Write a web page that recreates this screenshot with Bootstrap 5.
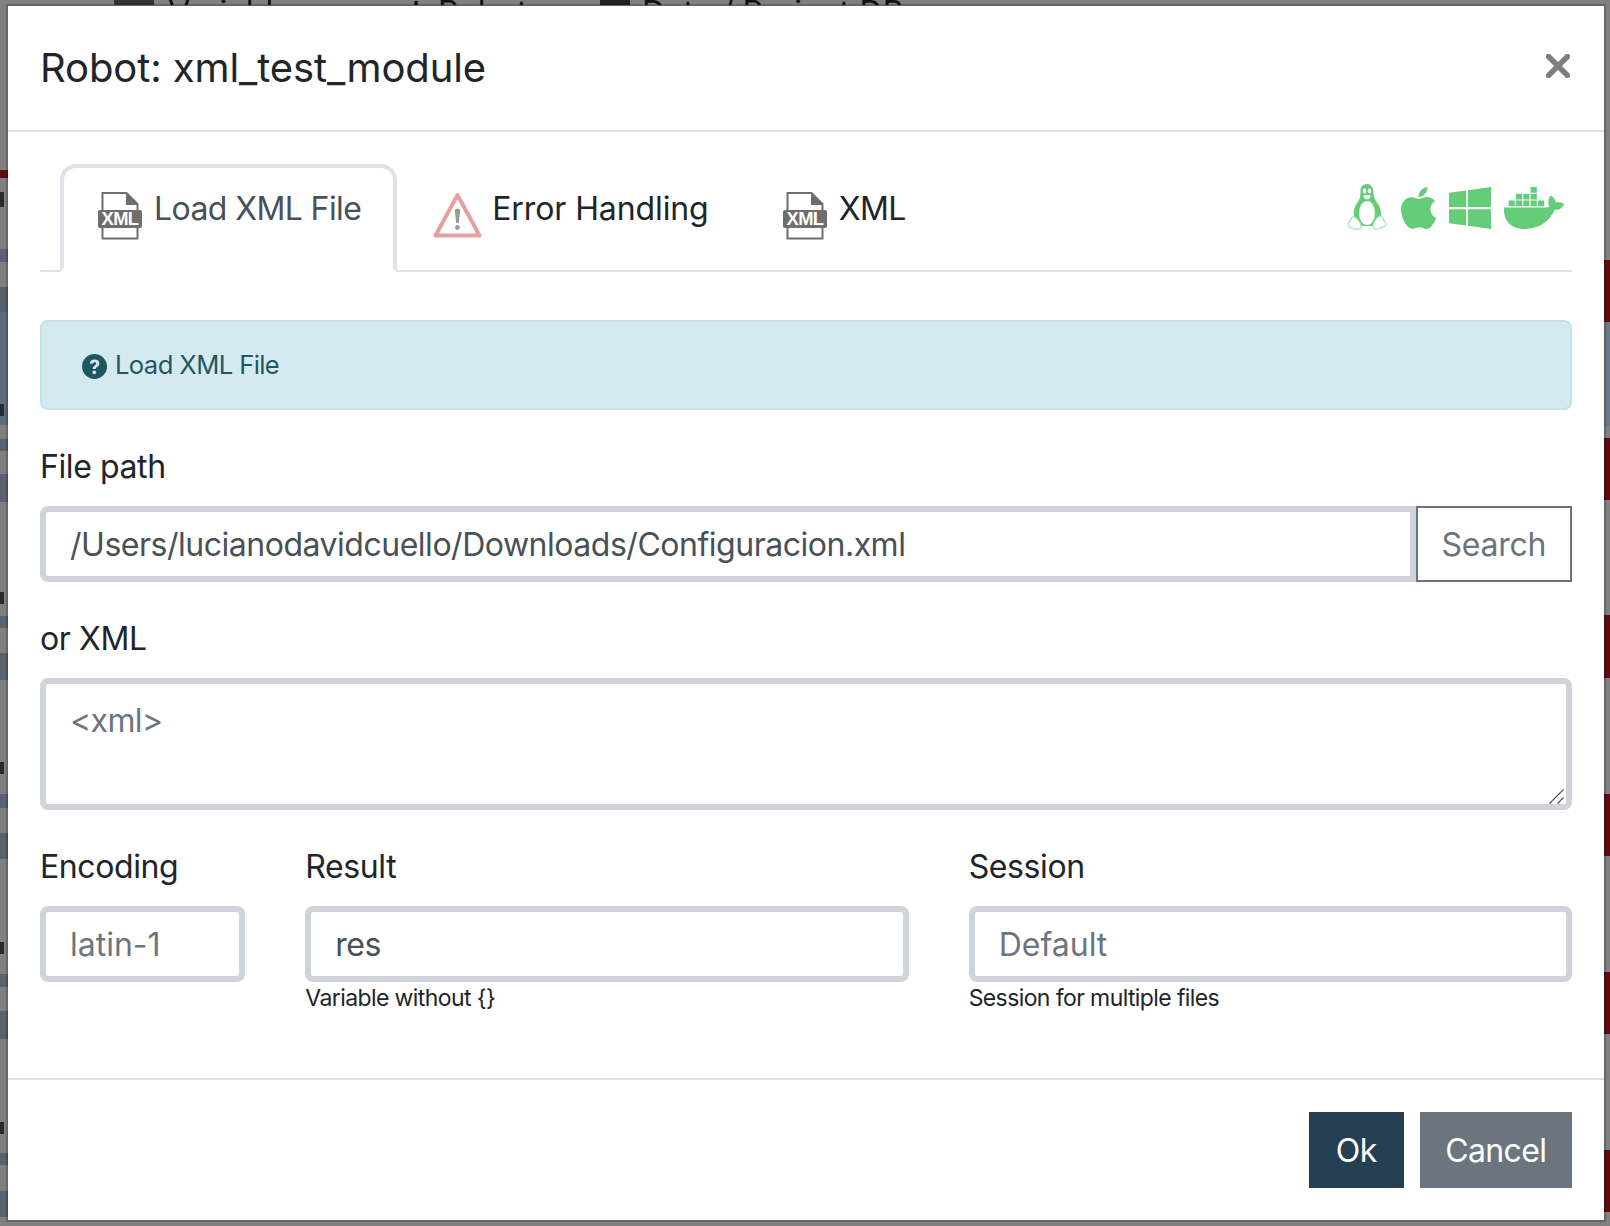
<!DOCTYPE html>
<html lang="en">
<head>
  <meta charset="UTF-8">
  <meta name="viewport" content="width=device-width, initial-scale=1.0">
  <title>Robot: xml_test_module</title>
  <link href="https://cdn.jsdelivr.net/npm/bootstrap@5.3.2/dist/css/bootstrap.min.css" rel="stylesheet">
  <style>
    html { font-size: 32px; }
    body {
      font-family: Inter, "Open Sans", "Liberation Sans", sans-serif;
      letter-spacing: -.6px;
      color: #212529;
      overflow: hidden;
      height: 1226px;
      background-color: #808080;
      background-repeat: no-repeat;
      background-image:
        linear-gradient(#0000 0 192px, #2a2a2a 192px 207px, #0000 207px 404px, #2a2a2a 404px 416px, #0000 416px 592px, #2a2a2a 592px 604px, #0000 604px 762px, #2a2a2a 762px 774px, #0000 774px 942px, #2a2a2a 942px 954px, #0000 954px 1122px, #2a2a2a 1122px 1134px, #0000 1134px),
        linear-gradient(#808080 0 170px, #5c0e0e 170px 178px, #808080 178px 249px, #5a6370 249px 262px, #808080 262px 287px, #555e6b 287px 312px, #5d6b7e 312px 425px, #808080 425px 439px, #59626f 439px 451px, #808080 451px 474px, #59626f 474px 502px, #808080 502px 616px, #59626f 616px 628px, #808080 628px 653px, #59626f 653px 680px, #808080 680px 794px, #59626f 794px 808px, #808080 808px 833px, #59626f 833px 859px, #808080 859px 974px, #59626f 974px 987px, #808080 987px 1011px, #59626f 1011px 1039px, #808080 1039px 1153px, #59626f 1153px 1165px, #808080 1165px 1191px, #59626f 1191px 1217px, #808080 1217px),
        linear-gradient(#808080 0 260px, #5c0e0e 260px 322px, #6b7888 322px 426px, #808080 426px 438px, #5c0e0e 438px 500px, #808080 500px 615px, #5c0e0e 615px 678px, #808080 678px 794px, #5c0e0e 794px 856px, #808080 856px 972px, #5c0e0e 972px 1034px, #808080 1034px 1150px, #5c0e0e 1150px 1212px, #808080 1212px);
      background-size: 4px 100%, 8px 100%, 6px 100%;
      background-position: left top, left top, right top;
    }

    /* what is left of the page behind the dialog, only the tops of the letters show */
    .behind-strip { height: 5px; overflow: hidden; padding-left: 114px; color: #111; letter-spacing: .2px; }
    .behind-strip span { line-height: 32px; margin-top: -3px; white-space: nowrap; flex-shrink: 0; }
    .behind-block { width: 40px; height: 10px; background: #333; margin-right: 14px; }
    .behind-block-sm { width: 30px; height: 10px; background: #222; margin-right: 12px; }
    .w-vars { width: 232px; }
    .w-dots { width: 38px; }
    .w-robot { width: 162px; }

    .modal {
      --bs-modal-width: 1600px;
      --bs-modal-border-width: 2px;
      --bs-modal-border-color: rgba(0, 0, 0, .2);
      --bs-modal-border-radius: 0;
      --bs-modal-inner-border-radius: 0;
      --bs-modal-header-border-color: #dee2e6;
      --bs-modal-header-border-width: 2px;
      --bs-modal-footer-border-color: #dee2e6;
      --bs-modal-footer-border-width: 2px;
      overflow: hidden;
    }
    .modal-dialog { margin: 4px 0 0 6px !important; width: 1600px; }
    .modal-title { font-size: 40px; font-weight: 400; letter-spacing: -.1px; }
    .close-x { background: none; border: 0; padding: 0; width: 24px; height: 24px; margin: 0 2px 4px auto; line-height: 0; }

    .tabs-row { padding-left: 20px; border-bottom: 2px solid #dee2e6; margin-bottom: 48px; }
    .tabs-row .nav-link {
      display: flex;
      align-items: flex-start;
      gap: 12px;
      padding: 17px 32px 28px;
      margin-bottom: -2px;
      border: 4px solid transparent;
      border-radius: 16px 16px 0 0;
      color: #212529;
    }
    .tabs-row .nav-link.active { color: #495057; border-color: #dee2e6 #dee2e6 #fff; background: #fff; }
    .tabs-row .nav-link.tab-error { gap: 10px; letter-spacing: -.1px; }
    .tab-ico { margin-top: 7px; flex-shrink: 0; }
    .xml-ico { margin-left: 2px; }
    .os-icons { margin-left: auto; padding: 19px 8px 0 0; display: flex; gap: 13px; align-items: flex-start; }
    .os-icons svg { margin-top: 4px; fill: #65cc78; }
    .os-icons svg.tux { margin-top: 0; margin-right: 1px; }

    .info-box {
      --bs-alert-bg: #d5eaf0;
      --bs-alert-color: #1f5662;
      --bs-alert-border-color: #c0e3ea;
      --bs-alert-padding-x: 40px;
      --bs-alert-padding-y: 24px;
      --bs-alert-margin-bottom: 32px;
      --bs-alert-border-radius: 8px;
      border-width: 2px;
      font-size: 25.6px;
    }
    .info-ico { width: 25px; height: 25px; margin-right: 8px; vertical-align: -5px; fill: #1f5662; }

    .form-label { margin-bottom: 15px; padding-top: 1px; letter-spacing: -.4px; }
    .field-block { margin-bottom: 32px; }
    .form-control {
      border: 6px solid #ced4da;
      border-radius: 8px;
      padding: 9px 24px 7px;
      color: #495057;
      letter-spacing: -.48px;
    }
    .form-control::placeholder { color: #6c757d; opacity: 1; letter-spacing: 0; }
    textarea.form-control {
      height: 132px;
      padding-top: 13px;
      resize: none;
      background: #fff url("data:image/svg+xml,%3Csvg xmlns='http://www.w3.org/2000/svg' width='15' height='15'%3E%3Cpath d='M.5 14.500l14-14M8.500 14.500l6-6' stroke='%23555' stroke-width='1.200'/%3E%3C/svg%3E") no-repeat right 2px bottom 0;
    }
    textarea.form-control::placeholder { letter-spacing: -.6px; }
    .btn-search {
      --bs-btn-border-width: 2px;
      --bs-btn-padding-x: 24px;
      --bs-btn-padding-y: 12px;
      --bs-btn-font-size: 1rem;
      letter-spacing: -.3px;
      padding-top: 13px;
      padding-bottom: 11px;
      border-radius: 0 !important;
      margin-left: 0 !important;
    }
    .path-group > .form-control { border-radius: 8px 0 0 8px; }
    .cols-row { --bs-gutter-x: 60px; }
    .hint-text { display: block; font-size: 23px; line-height: 34px; height: 34px; margin-top: -1px; color: #212529; }
    .body-pad { padding-bottom: 63px !important; }
    .btn-square {
      --bs-btn-padding-x: 23.5px;
      --bs-btn-border-width: 2px;
      --bs-btn-font-size: 1rem;
      letter-spacing: -.6px;
      padding-top: 13px;
      padding-bottom: 11px;
      border-radius: 0;
    }
    .btn-ok { --bs-btn-padding-x: 25px; --bs-btn-bg: #264053; --bs-btn-border-color: #264053; --bs-btn-color: #fff; }
  </style>
</head>
<body>

  <div class="behind-strip d-flex align-items-start">
    <div class="behind-block"></div>
    <span class="w-vars">Variables</span>
    <span class="w-dots">⋮</span>
    <span class="w-robot">Robot</span>
    <div class="behind-block-sm"></div>
    <span>Data / Project DB</span>
  </div>

  <svg width="0" height="0" class="position-absolute">
    <symbol id="xml-file" viewBox="0 0 44 48">
      <path d="M4.500 1h24L39.500 12v34.500h-35z" fill="#fff" stroke="#6e6e6e" stroke-width="2"/>
      <path d="M28 1l12 12H28z" fill="#6e6e6e"/>
      <rect x="0" y="18" width="44" height="18" rx="2" fill="#6e6e6e"/>
      <text x="22" y="33" text-anchor="middle" font-family="Liberation Sans, sans-serif" font-weight="700" font-size="19" textLength="37" lengthAdjust="spacingAndGlyphs" fill="#fff">XML</text>
    </symbol>
  </svg>

  <div class="modal d-block" tabindex="-1">
    <div class="modal-dialog">
      <div class="modal-content">
        <div class="modal-header">
          <h5 class="modal-title">Robot: xml_test_module</h5>
          <button type="button" class="close-x" aria-label="Close">
            <svg width="24" height="24" viewBox="0 0 24 24"><path d="M2.500 2.500l19 19M21.500 2.500l-19 19" stroke="#7f7f7f" stroke-width="5.500" stroke-linecap="round"/></svg>
          </button>
        </div>

        <div class="modal-body body-pad">
          <ul class="nav tabs-row">
            <li class="nav-item">
              <a class="nav-link active" href="#">
                <svg class="tab-ico xml-ico" width="44" height="48"><use href="#xml-file"/></svg>
                Load XML File
              </a>
            </li>
            <li class="nav-item">
              <a class="nav-link tab-error" href="#">
                <svg class="tab-ico" width="49" height="46" viewBox="0 0 49 46">
                  <path d="M24.500 3L2.500 43.500h44z" fill="#fff" stroke="#e8a09e" stroke-width="4" stroke-linejoin="round"/>
                  <path d="M21.800 18.500c0-2.500 5.400-2.500 5.400 0l-1.400 12.500h-2.600z" fill="#999"/>
                  <circle cx="24.500" cy="35.500" r="2.400" fill="#999"/>
                </svg>
                Error Handling
              </a>
            </li>
            <li class="nav-item">
              <a class="nav-link" href="#">
                <svg class="tab-ico xml-ico" width="44" height="48"><use href="#xml-file"/></svg>
                XML
              </a>
            </li>
            <li class="os-icons">
              <svg class="tux" width="40" height="49" viewBox="0 0 40 49">
                <path d="M20 1c-5 0-7 4-6.500 9 .3 4-1.500 7-3.500 10-2.500 4-4 8-3 13l3 7 5 3h10l6-3 3-8c.5-5-1.500-9-4-12.500-2-3-3.500-5.500-3.500-9.500 0-5-2-9-6.500-9z"/>
                <ellipse cx="20" cy="30" rx="8" ry="12" fill="#fff"/>
                <ellipse cx="17.500" cy="8" rx="1.800" ry="2.400" fill="#fff"/>
                <ellipse cx="22.500" cy="8" rx="1.800" ry="2.400" fill="#fff"/>
                <path d="M15.500 12.500c2-1.500 7-1.500 9 0-1 3-3 4.500-4.500 4.500s-3.500-1.500-4.500-4.500z" fill="#fff" stroke="#65cc78"/>
                <path d="M1.500 40c2-2 2-5 4-6 3-1 5 2 7 5 1.500 2.500 2.500 5 1 6.500-3 2-6 .5-9-.5-2-.5-4-2-3-5z" fill="#fff" stroke="#a5e2b0" stroke-width="1.200"/>
                <path d="M38.500 40c-2-1.500-1.500-5-4-6.500-1-1-3 0-5 2-2.500 3-4 6.500-3 9 1 2 3.500 2 6 1 2-1 4.500-1.500 6-3 .7-.8.7-1.800 0-2.500z" fill="#fff" stroke="#a5e2b0" stroke-width="1.200"/>
              </svg>
              <svg width="35" height="42" viewBox="4 32 374 448"><path d="M318.700 268.700c-.2-36.700 16.400-64.400 50-84.800-18.800-26.900-47.200-41.700-84.700-44.600-35.500-2.800-74.300 20.700-88.500 20.700-15 0-49.400-19.700-76.400-19.700C63.300 141.200 4 184.800 4 273.500q0 39.300 14.400 81.200c12.800 36.700 59 126.700 107.200 125.200 25.200-.6 43-17.900 75.800-17.900 31.800 0 48.300 17.900 76.400 17.900 48.600-.7 90.400-82.500 102.600-119.300-65.200-30.700-61.700-90-61.700-91.900zm-56.600-164.200c27.300-32.400 24.800-61.900 24-72.500-24.100 1.400-52 16.400-67.900 34.900-17.500 19.800-27.800 44.300-25.600 71.900 26.100 2 49.900-11.400 69.500-34.300z"/></svg>
              <svg width="42" height="42" viewBox="0 32 448 448"><path d="M0 93.700l183.600-25.300v177.400H0V93.700zm0 324.600l183.600 25.300V268.400H0v149.900zm202.800 28L448 480V268.400H202.800v177.900zm0-380.600v180.100H448V32L202.800 65.700z"/></svg>
              <svg width="60" height="42" viewBox="0 32 640 448"><path d="M349.900 236.300h-66.100v-59.400h66.100v59.400zm0-204.300h-66.100v60.700h66.100V32zm78.200 144.800H362v59.400h66.100v-59.400zm-156.300-72.100h-66.100v60.100h66.100v-60.100zm78.100 0h-66.100v60.100h66.100v-60.100zm276.800 100c-14.400-9.700-47.600-13.200-73.100-8.400-3.300-24-16.700-44.900-41.100-63.700l-14-9.300-9.300 14c-18.400 27.800-23.400 73.600-3.700 103.800-8.700 4.700-25.800 11.100-48.400 10.700H2.400c-8.700 50.800 5.800 116.800 44 162.100 37.100 43.900 92.700 66.200 165.400 66.200 157.400 0 273.900-72.500 328.400-204.200 21.400.4 67.600.1 91.300-45.200 1.500-2.500 6.600-13.200 8.500-17.100l-13.300-8.900zm-511.100-27.900h-66v59.400h66.100v-59.400zm78.100 0h-66.100v59.400h66.100v-59.400zm78.100 0h-66.100v59.400h66.100v-59.400zm-78.100-72.100h-66.100v60.100h66.100v-60.100z"/></svg>
            </li>
          </ul>

          <div class="alert alert-info info-box" role="alert">
            <svg class="info-ico" viewBox="0 0 25 25"><circle cx="12.500" cy="12.500" r="12.500"/><path d="M7.800 9.500c.3-2.600 2.200-4 4.900-4 2.700 0 4.700 1.600 4.700 3.900 0 1.900-1.100 2.800-2.400 3.600-.9.600-1.200 1-1.200 1.900h-3c0-1.800.6-2.700 1.900-3.500.9-.6 1.500-1 1.500-1.800 0-.9-.7-1.400-1.600-1.400-1 0-1.600.6-1.800 1.500z" fill="#d5eaf0"/><circle cx="12.300" cy="18.300" r="1.900" fill="#d5eaf0"/></svg>Load XML File
          </div>

          <div class="field-block">
            <label class="form-label">File path</label>
            <div class="input-group path-group">
              <input type="text" class="form-control" value="/Users/lucianodavidcuello/Downloads/Configuracion.xml">
              <button class="btn btn-outline-secondary btn-search" type="button">Search</button>
            </div>
          </div>

          <div class="field-block">
            <label class="form-label">or XML</label>
            <textarea class="form-control" placeholder="&lt;xml&gt;"></textarea>
          </div>

          <div class="row cols-row">
            <div class="col-2">
              <label class="form-label">Encoding</label>
              <input type="text" class="form-control" placeholder="latin-1">
            </div>
            <div class="col-5">
              <label class="form-label">Result</label>
              <input type="text" class="form-control" value="res">
              <small class="hint-text">Variable without {}</small>
            </div>
            <div class="col-5">
              <label class="form-label">Session</label>
              <input type="text" class="form-control" placeholder="Default">
              <small class="hint-text">Session for multiple files</small>
            </div>
          </div>
        </div>

        <div class="modal-footer">
          <button type="button" class="btn btn-square btn-ok">Ok</button>
          <button type="button" class="btn btn-secondary btn-square">Cancel</button>
        </div>
      </div>
    </div>
  </div>

  <script src="https://cdn.jsdelivr.net/npm/bootstrap@5.3.2/dist/js/bootstrap.bundle.min.js"></script>
</body>
</html>
